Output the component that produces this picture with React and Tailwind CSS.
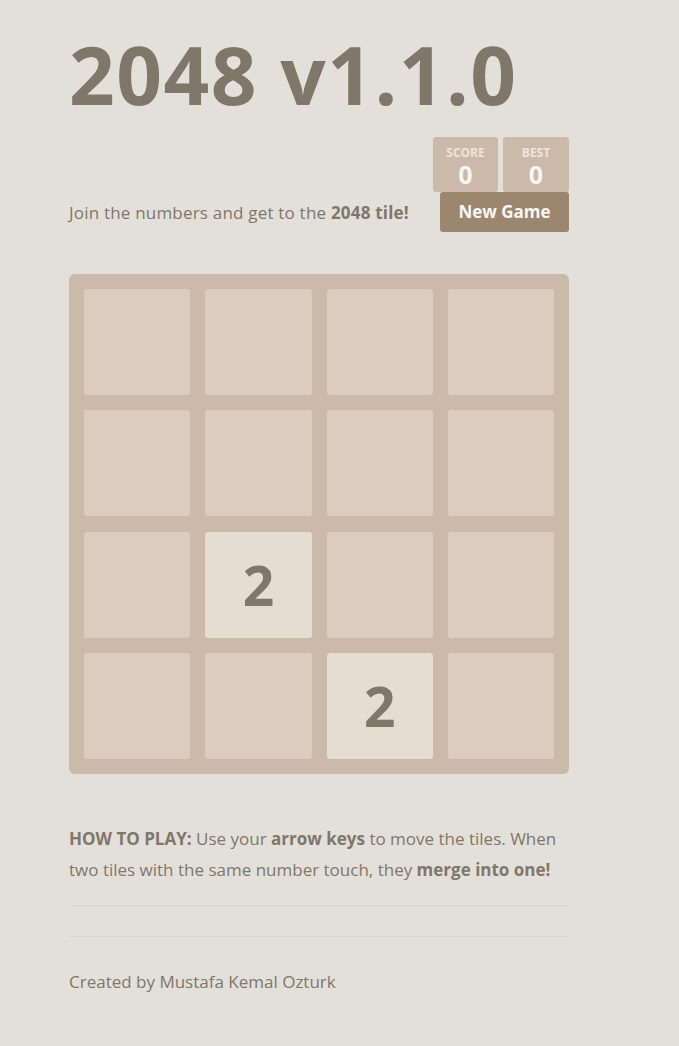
import { useState } from 'react';

function Tile({ value }) {
    if (!value) {
        return <div className="h-[106px] rounded-[3px] bg-[#dacdbf]" />;
    }
    return (
        <div className="h-[106px] rounded-[3px] bg-[#e5ddd1] flex items-center justify-center text-[55px] font-bold text-[#80776b] leading-none">
            {value}
        </div>
    );
}

function App() {
    const [board] = useState([
        [0, 0, 0, 0],
        [0, 0, 0, 0],
        [0, 2, 0, 0],
        [0, 0, 2, 0],
    ]);

    return (
        <div className="min-h-screen bg-[#e3e0d9] text-[#80776b]" style={{ fontFamily: '"Open Sans", "Noto Sans", Arial, sans-serif' }}>
            <div className="w-[500px] ml-[69px] pt-[34px] pb-10">
                <h1 className="text-[80px] font-bold leading-none tracking-[1.5px]">2048 v1.1.0</h1>

                <div className="flex justify-end gap-[5px] mt-[23px]">
                    <div className="w-[65px] h-[55px] rounded-[3px] bg-[#cbb9aa] flex flex-col items-center justify-center pt-[5px]">
                        <span className="text-[12px] font-bold uppercase text-[#eee4da] leading-none">Score</span>
                        <span className="text-[25px] font-bold text-[#f9f6f2] leading-none mt-[3px]">0</span>
                    </div>
                    <div className="w-[66px] h-[55px] rounded-[3px] bg-[#cbb9aa] flex flex-col items-center justify-center pt-[5px]">
                        <span className="text-[12px] font-bold uppercase text-[#eee4da] leading-none">Best</span>
                        <span className="text-[25px] font-bold text-[#f9f6f2] leading-none mt-[3px]">0</span>
                    </div>
                </div>

                <div className="flex items-center justify-between">
                    <p className="text-[17px] leading-none tracking-[0.2px]">
                        Join the numbers and get to the <strong>2048 tile!</strong>
                    </p>
                    <button className="w-[129px] h-[40px] rounded-[3px] bg-[#9d8670] text-[17px] font-bold text-[#f9f6f2]">
                        New Game
                    </button>
                </div>

                <div className="mt-[42px] w-[500px] h-[500px] rounded-[6px] bg-[#cbb9aa] p-[15px] grid grid-cols-4 gap-[15px]">
                    {board.flat().map((v, i) => (
                        <Tile key={i} value={v} />
                    ))}
                </div>

                <p className="mt-[49px] text-[17px] leading-[31px]">
                    <strong>HOW TO PLAY:</strong> Use your <strong>arrow keys</strong> to move the tiles. When two tiles with the same number touch, they <strong>merge into one!</strong>
                </p>

                <hr className="mt-[20px] border-t border-[#d9d5cd]" />
                <hr className="mt-[30px] border-t border-[#d9d5cd]" />

                <p className="mt-[30px] text-[17px] leading-[30px]">Created by Mustafa Kemal Ozturk</p>
            </div>
        </div>
    );
}

export default App;
